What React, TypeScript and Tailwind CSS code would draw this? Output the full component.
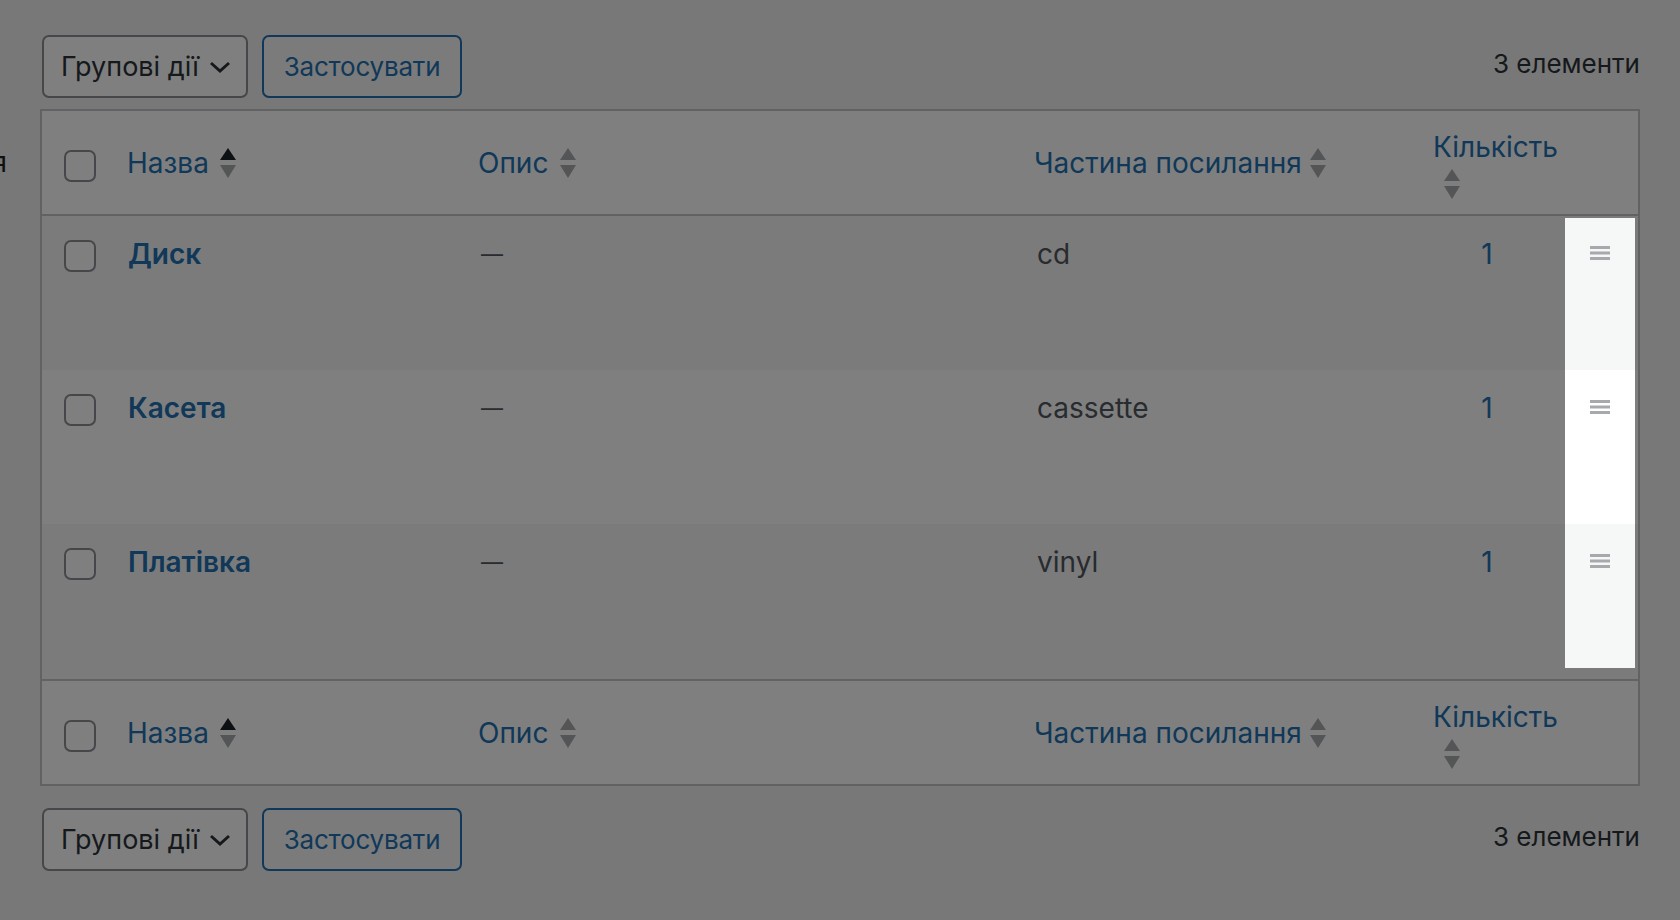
import React from "react";

type Term = { name: string; slug: string; count: number };

const terms: Term[] = [
  { name: "Диск", slug: "cd", count: 1 },
  { name: "Касета", slug: "cassette", count: 1 },
  { name: "Платівка", slug: "vinyl", count: 1 },
];

const SortArrows = ({ active }: { active?: boolean }) => (
  <svg width="16" height="30" viewBox="0 0 16 30" className="shrink-0">
    <polygon points="8,0 16,12 0,12" fill={active ? "#1d2327" : "#a7aaad"} />
    <polygon points="0,17 16,17 8,30" fill="#a7aaad" />
  </svg>
);

const Checkbox = ({ className = "" }: { className?: string }) => (
  <span
    className={`block w-[32px] h-[32px] rounded-[7px] border-2 border-[#8c8f94] bg-white shrink-0 ${className}`}
  />
);

const HandleIcon = () => (
  <svg width="20" height="14" viewBox="0 0 20 14" className="mx-auto block">
    <rect x="0" y="0" width="20" height="3" fill="#a7aaad" />
    <rect x="0" y="5.5" width="20" height="3" fill="#a7aaad" />
    <rect x="0" y="11" width="20" height="3" fill="#a7aaad" />
  </svg>
);

const TableNav = ({ className = "" }: { className?: string }) => (
  <div className={`flex justify-between ${className}`}>
    <div className="flex gap-[14px]">
      <div className="w-[206px] h-[63px] rounded-[7px] border-2 border-[#8c8f94] bg-white flex items-center justify-between pl-[17px] pr-[15px] text-[27px] leading-[40px] text-[#2c3338]">
        <span>Групові дії</span>
        <svg width="22" height="12" viewBox="0 0 22 12" fill="none">
          <path d="M2 2 L11 10 L20 2" stroke="#2c3338" strokeWidth="3" />
        </svg>
      </div>
      <div className="w-[200px] h-[63px] rounded-[7px] border-2 border-[#2271b1] bg-[#f6f7f7] flex items-center justify-center text-[26px] tracking-[-0.2px] leading-[40px] text-[#2271b1]">
        Застосувати
      </div>
    </div>
    <div className="mt-[11px] text-[26px] leading-[36px] text-[#2c3338]">
      3 елементи
    </div>
  </div>
);

const HeaderRow = ({ className = "" }: { className?: string }) => (
  <div className={`flex h-[105px] bg-white ${className}`}>
    <div className="w-[69px] flex items-center pl-[22px]">
      <Checkbox className="mt-[6px]" />
    </div>
    <div className="w-[351px] flex items-center pl-[16px] text-[#2271b1]">
      <span>Назва</span>
      <span className="ml-[11px]">
        <SortArrows active />
      </span>
    </div>
    <div className="w-[556px] flex items-center pl-[16px] text-[#2271b1]">
      <span>Опис</span>
      <span className="ml-[12px]">
        <SortArrows />
      </span>
    </div>
    <div className="w-[399px] flex items-center pl-[16px] text-[#2271b1]">
      <span>Частина посилання</span>
      <span className="ml-[8px]">
        <SortArrows />
      </span>
    </div>
    <div className="w-[140px] flex items-center pl-[16px] text-[#2271b1]">
      <div>
        <div>Кількість</div>
        <div className="ml-[11px] mt-[2px]">
          <SortArrows />
        </div>
      </div>
    </div>
    <div className="w-[81px]" />
  </div>
);

export default function App() {
  return (
    <div className="relative w-[1680px] h-[920px] overflow-hidden bg-[#f0f0f1] font-['Inter',_'Liberation_Sans',_sans-serif] text-[28px] leading-[40px]">
      <div className="flex">
        <div className="w-[40px] shrink-0">
          <div className="w-[7px] overflow-hidden flex justify-end mt-[142px] text-[#1d2327]">
            <span className="whitespace-nowrap">Частина посилання</span>
          </div>
        </div>

        <div className="w-[1600px] shrink-0 pt-[35px]">
          <TableNav className="pl-[2px]" />

          <div className="mt-[11px] border-2 border-[#c3c4c7]">
            <HeaderRow className="border-b-2 border-[#c3c4c7]" />

            {terms.map((t, i) => {
              const bg = i % 2 === 0 ? "bg-[#f6f7f7]" : "bg-white";
              const h = i === 2 ? "h-[155px]" : "h-[154px]";
              const win =
                i === 0
                  ? "mt-[2px] pt-[28px] h-[152px]"
                  : i === 2
                  ? "pt-[30px] h-[144px]"
                  : "pt-[30px] h-[154px]";
              return (
                <div key={t.slug} className={`flex ${h} ${bg}`}>
                  <div className="w-[69px] pl-[22px] pt-[24px]">
                    <Checkbox />
                  </div>
                  <div className="w-[351px] pl-[17px] pt-[18px] font-semibold text-[#2271b1]">
                    {t.name}
                  </div>
                  <div className="w-[556px] pl-[19px] pt-[18px] text-[22px] text-[#50575e]">
                    —
                  </div>
                  <div className="w-[399px] pl-[19px] pt-[18px] text-[#50575e]">
                    {t.slug}
                  </div>
                  <div className="w-[140px] pt-[18px] text-center text-[#2271b1]">
                    {t.count}
                  </div>
                  <div className="w-[81px] pl-[8px] pr-[3px]">
                    <div className={`relative z-20 ${win} ${bg}`}>
                      <HandleIcon />
                    </div>
                  </div>
                </div>
              );
            })}

            <HeaderRow className="border-t-2 border-[#c3c4c7]" />
          </div>

          <TableNav className="pl-[2px] mt-[22px]" />
        </div>
      </div>

      <div className="absolute inset-0 z-10 bg-black/50" />
    </div>
  );
}
